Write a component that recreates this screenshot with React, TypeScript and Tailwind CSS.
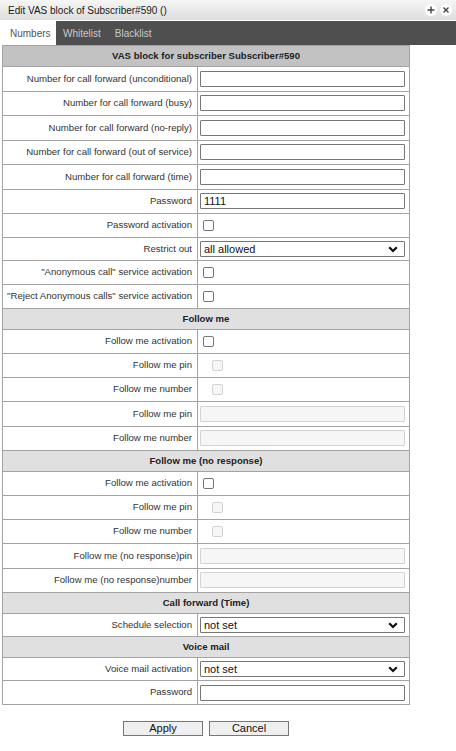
import React from "react";

type Row =
  | { kind: "header"; text: string; dark?: boolean }
  | { kind: "input"; label: string; value?: string; disabled?: boolean; last?: boolean }
  | { kind: "check"; label: string; disabled?: boolean }
  | { kind: "select"; label: string; value: string };

const rows: Row[] = [
  { kind: "header", text: "VAS block for subscriber Subscriber#590", dark: true },
  { kind: "input", label: "Number for call forward (unconditional)" },
  { kind: "input", label: "Number for call forward (busy)" },
  { kind: "input", label: "Number for call forward (no-reply)" },
  { kind: "input", label: "Number for call forward (out of service)" },
  { kind: "input", label: "Number for call forward (time)" },
  { kind: "input", label: "Password", value: "1111" },
  { kind: "check", label: "Password activation" },
  { kind: "select", label: "Restrict out", value: "all allowed" },
  { kind: "check", label: "\"Anonymous call\" service activation" },
  { kind: "check", label: "\"Reject Anonymous calls\" service activation" },
  { kind: "header", text: "Follow me" },
  { kind: "check", label: "Follow me activation" },
  { kind: "check", label: "Follow me pin", disabled: true },
  { kind: "check", label: "Follow me number", disabled: true },
  { kind: "input", label: "Follow me pin", disabled: true },
  { kind: "input", label: "Follow me number", disabled: true },
  { kind: "header", text: "Follow me (no response)" },
  { kind: "check", label: "Follow me activation" },
  { kind: "check", label: "Follow me pin", disabled: true },
  { kind: "check", label: "Follow me number", disabled: true },
  { kind: "input", label: "Follow me (no response)pin", disabled: true },
  { kind: "input", label: "Follow me (no response)number", disabled: true },
  { kind: "header", text: "Call forward (Time)" },
  { kind: "select", label: "Schedule selection", value: "not set" },
  { kind: "header", text: "Voice mail" },
  { kind: "select", label: "Voice mail activation", value: "not set" },
  { kind: "input", label: "Password", last: true },
];

function Chevron() {
  return (
    <svg width="10" height="7" viewBox="0 0 10 7" className="shrink-0">
      <polyline points="1.2,1.2 5,5 8.8,1.2" fill="none" stroke="#111" strokeWidth="2.2" />
    </svg>
  );
}

function Value({ row }: { row: Row }) {
  if (row.kind === "input") {
    return (
      <div
        className={
          row.disabled
            ? "h-[16px] w-[205px] rounded-[1px] border border-[#d3d3d3] bg-[#f6f6f6]"
            : "h-[16px] w-[205px] rounded-[1px] border border-[#767676] bg-white pl-[3px] text-[11px] leading-[14px] text-[#111]"
        }
      >
        {row.value ?? ""}
      </div>
    );
  }
  if (row.kind === "check") {
    return row.disabled ? (
      <div className="ml-[12px] h-[11px] w-[11px] rounded-[2px] border border-[#d3d3d3] bg-[#f6f6f6]" />
    ) : (
      <div className="ml-[3px] h-[11px] w-[11px] rounded-[2px] border border-[#767676] bg-white" />
    );
  }
  if (row.kind === "select") {
    return (
      <div className="flex h-[16px] w-[205px] items-center justify-between rounded-[1px] border border-[#767676] bg-white pl-[3px] pr-[6px] text-[11px] text-[#111]">
        <span className="leading-[14px]">{row.value}</span>
        <Chevron />
      </div>
    );
  }
  return null;
}

function rowHeight(row: Row) {
  if (row.kind === "input") return row.last ? "h-[23px]" : "h-[24.5px]";
  if (row.kind === "select") return "h-[23px]";
  return "h-[24px]";
}

export default function App() {
  return (
    <div className="relative h-[751px] w-[456px] overflow-hidden bg-white font-['Liberation_Sans',Arial,sans-serif]">
      {/* Title bar */}
      <div className="flex h-[21px] items-center justify-between border-b border-white bg-gradient-to-b from-[#f6f6f6] to-[#dedede] pl-[8px] pr-[4px]">
        <span className="text-[10px] text-[#1a1a1a]">Edit VAS block of Subscriber#590 ()</span>
        <div className="flex items-center gap-[3px]">
          <div className="flex h-[12px] w-[12px] items-center justify-center rounded-full bg-white">
            <svg width="8" height="8" viewBox="0 0 8 8">
              <path d="M4 0.5V7.5M0.5 4H7.5" stroke="#444" strokeWidth="1.4" />
            </svg>
          </div>
          <div className="flex h-[12px] w-[12px] items-center justify-center rounded-full bg-white">
            <svg width="8" height="8" viewBox="0 0 8 8">
              <path d="M1.5 1.5L6.5 6.5M6.5 1.5L1.5 6.5" stroke="#444" strokeWidth="1.4" />
            </svg>
          </div>
        </div>
      </div>

      {/* Tabs */}
      <div className="flex h-[24px] items-stretch bg-[#4f4f4f] text-[10px]">
        <div className="flex w-[56px] items-center bg-white pl-[10px] text-[#555]">Numbers</div>
        <div className="flex items-center pl-[7px] text-[#c9c9c9]">Whitelist</div>
        <div className="flex items-center pl-[14px] text-[#c9c9c9]">Blacklist</div>
      </div>

      {/* Table */}
      <div className="ml-[2px] flex w-[408px] flex-col border border-[#a3a3a3] text-[9.6px]">
        {rows.map((row, i) =>
          row.kind === "header" ? (
            <div
              key={i}
              className={
                "flex h-[21px] items-center justify-center border-b border-[#a3a3a3] font-bold text-[#222] " +
                (row.dark ? "bg-[#c2c2c2]" : "bg-[#e0e0e0]")
              }
            >
              {row.text}
            </div>
          ) : (
            <div key={i} className={"flex border-b border-[#a3a3a3] last:border-b-0 " + rowHeight(row)}>
              <div className="flex w-[195px] shrink-0 items-center justify-end border-r border-[#a3a3a3] pr-[5px] text-[#333]">
                {row.label}
              </div>
              <div className="flex flex-1 items-center pl-[2px]">
                <Value row={row} />
              </div>
            </div>
          )
        )}
      </div>

      {/* Buttons */}
      <div className="ml-[2px] mt-[16px] flex w-[408px] justify-center gap-[6px]">
        <button className="h-[15px] w-[80px] border border-[#767676] bg-[#efefef] text-[11px] leading-[13px] text-[#111]">
          Apply
        </button>
        <button className="h-[15px] w-[80px] border border-[#767676] bg-[#efefef] text-[11px] leading-[13px] text-[#111]">
          Cancel
        </button>
      </div>
    </div>
  );
}
